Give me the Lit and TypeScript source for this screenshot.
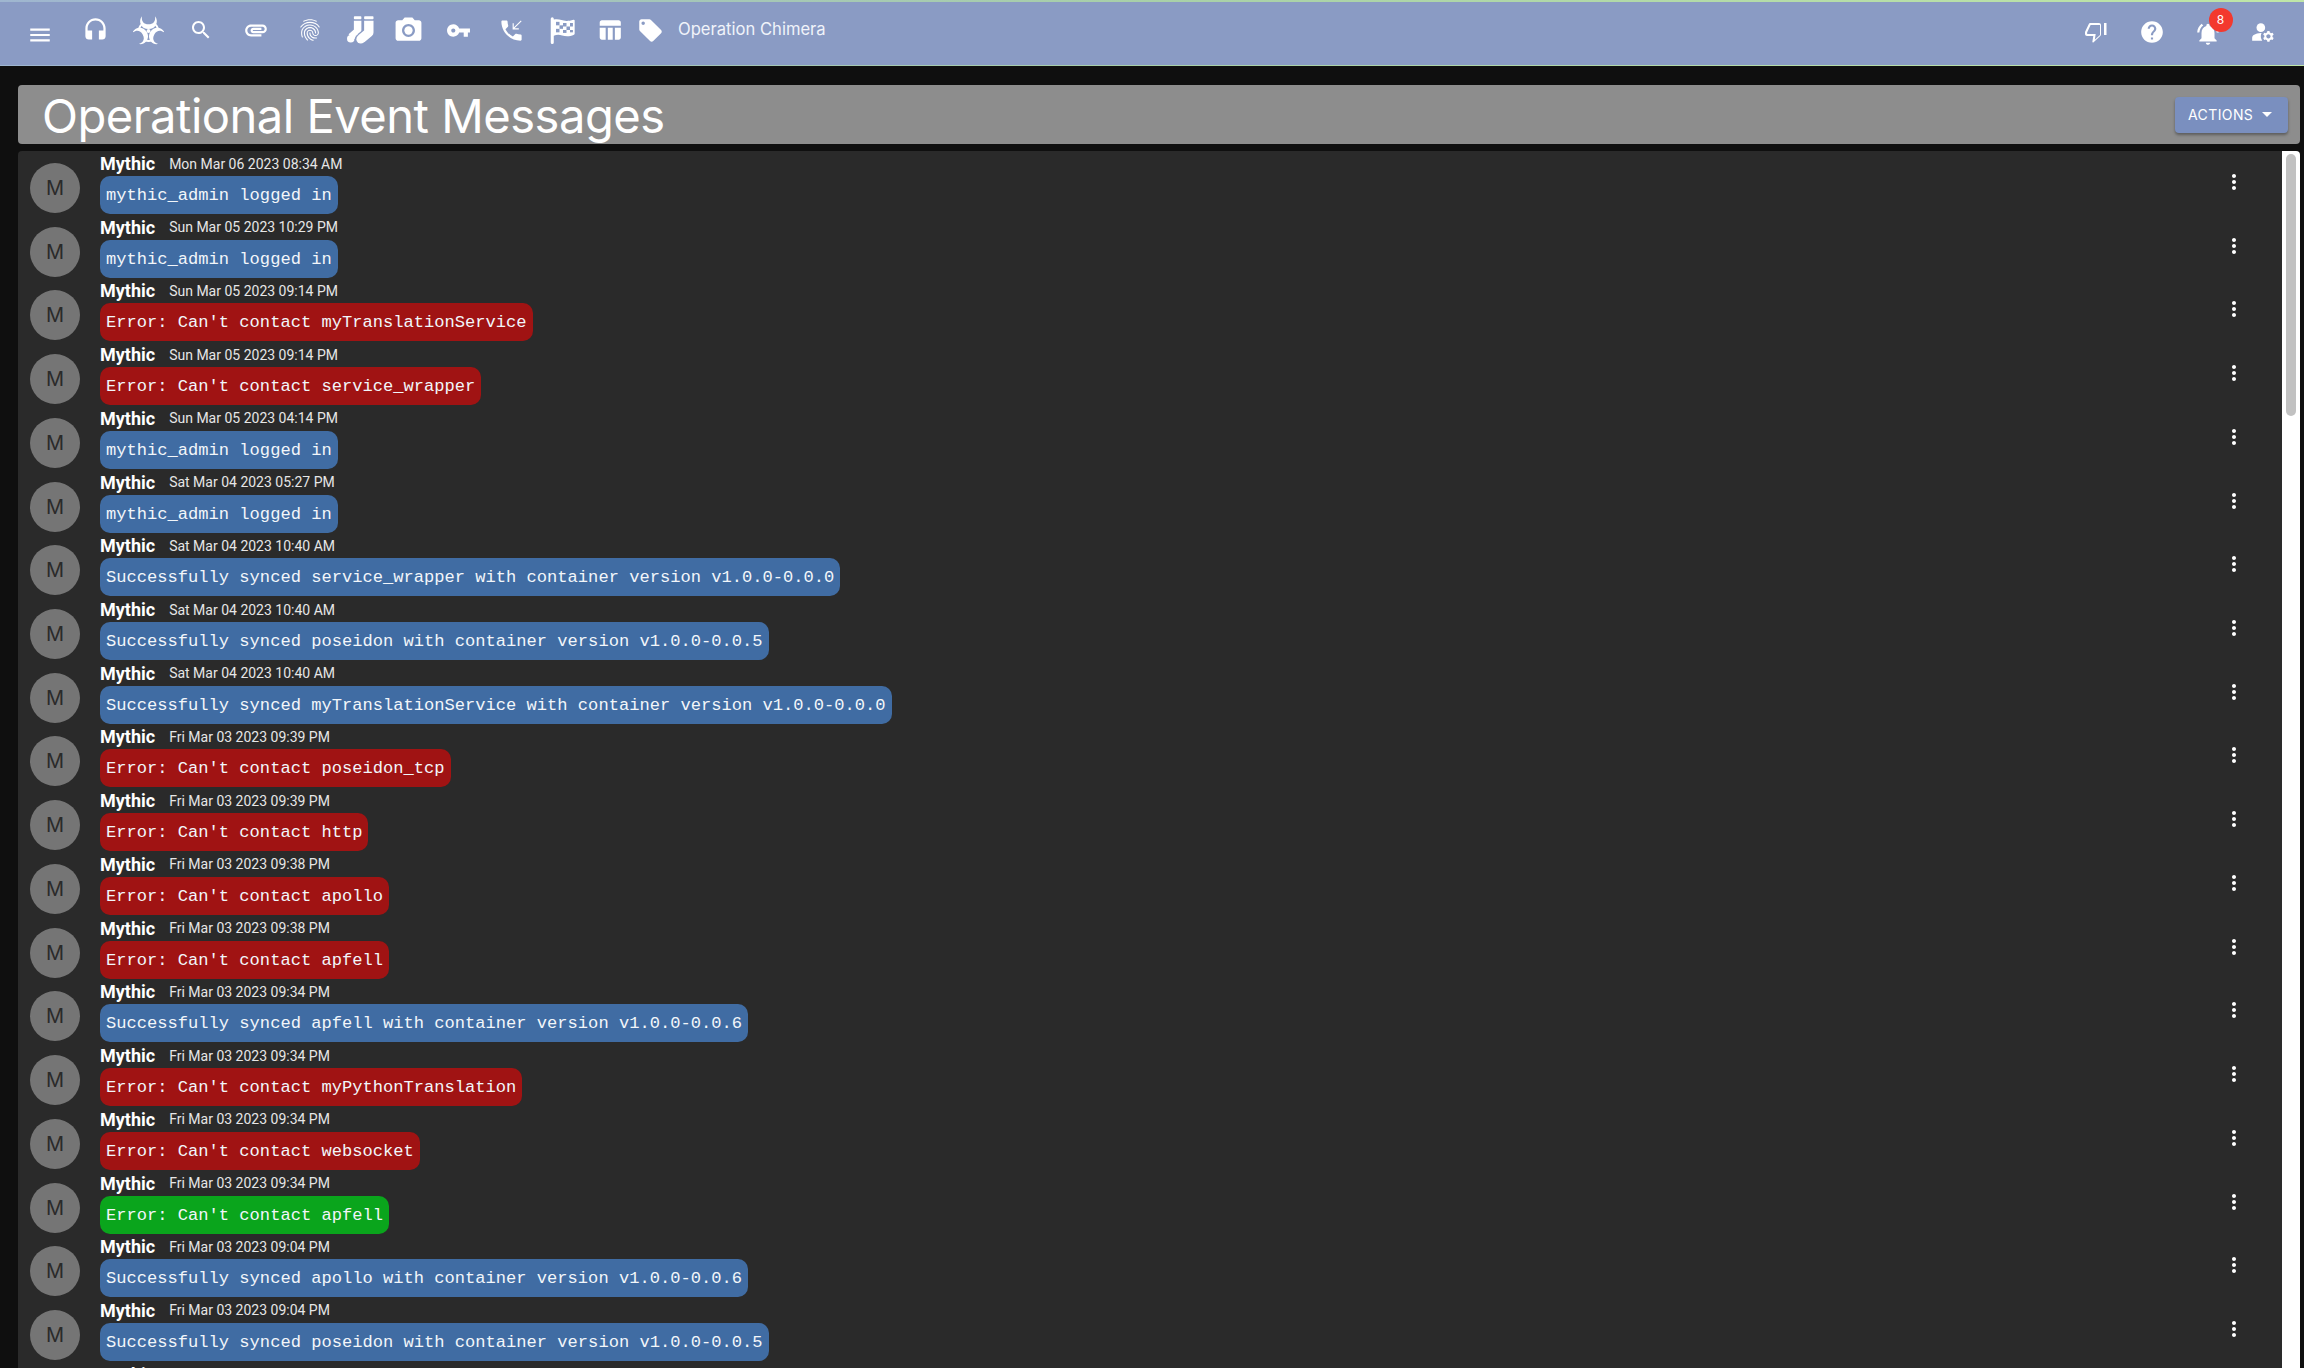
import { LitElement, html, css, svg } from "lit";
import { customElement } from "lit/decorators.js";

type Kind = "info" | "error" | "ok";
const rows: [string, string, Kind][] = [
  ["Mon Mar 06 2023 08:34 AM", "mythic_admin logged in", "info"],
  ["Sun Mar 05 2023 10:29 PM", "mythic_admin logged in", "info"],
  ["Sun Mar 05 2023 09:14 PM", "Error: Can't contact myTranslationService", "error"],
  ["Sun Mar 05 2023 09:14 PM", "Error: Can't contact service_wrapper", "error"],
  ["Sun Mar 05 2023 04:14 PM", "mythic_admin logged in", "info"],
  ["Sat Mar 04 2023 05:27 PM", "mythic_admin logged in", "info"],
  ["Sat Mar 04 2023 10:40 AM", "Successfully synced service_wrapper with container version v1.0.0-0.0.0", "info"],
  ["Sat Mar 04 2023 10:40 AM", "Successfully synced poseidon with container version v1.0.0-0.0.5", "info"],
  ["Sat Mar 04 2023 10:40 AM", "Successfully synced myTranslationService with container version v1.0.0-0.0.0", "info"],
  ["Fri Mar 03 2023 09:39 PM", "Error: Can't contact poseidon_tcp", "error"],
  ["Fri Mar 03 2023 09:39 PM", "Error: Can't contact http", "error"],
  ["Fri Mar 03 2023 09:38 PM", "Error: Can't contact apollo", "error"],
  ["Fri Mar 03 2023 09:38 PM", "Error: Can't contact apfell", "error"],
  ["Fri Mar 03 2023 09:34 PM", "Successfully synced apfell with container version v1.0.0-0.0.6", "info"],
  ["Fri Mar 03 2023 09:34 PM", "Error: Can't contact myPythonTranslation", "error"],
  ["Fri Mar 03 2023 09:34 PM", "Error: Can't contact websocket", "error"],
  ["Fri Mar 03 2023 09:34 PM", "Error: Can't contact apfell", "ok"],
  ["Fri Mar 03 2023 09:04 PM", "Successfully synced apollo with container version v1.0.0-0.0.6", "info"],
  ["Fri Mar 03 2023 09:04 PM", "Successfully synced poseidon with container version v1.0.0-0.0.5", "info"],
  ["Fri Mar 03 2023 09:04 PM", "Successfully synced apollo with container version v1.0.0-0.0.6", "info"],
];

const ic = (size: number, body: unknown) =>
  html`<svg class="ic" width=${size} height=${size} viewBox="0 0 24 24" fill="currentColor">${body}</svg>`;

const BAR = "#8a9bc4";
const menu = svg`<path d="M3 18h18v-2H3v2zm0-5h18v-2H3v2zm0-7v2h18V6H3z"/>`;
const headset = svg`<path d="M12 1c-4.97 0-9 4.03-9 9v7c0 1.66 1.34 3 3 3h3v-8H5v-2c0-3.87 3.13-7 7-7s7 3.13 7 7v2h-4v8h3c1.66 0 3-1.34 3-3v-7c0-4.97-4.03-9-9-9z"/>`;
const lobe = "M7 1.500C3.500 5.500 6.500 11.500 12 11.500S20.500 5.500 17 1.500C17.800 5.500 15.500 7.800 12 7.800S6.200 5.500 7 1.500z";
const biohazard = svg`
  <g transform="translate(0 -0.6)">
    <path d=${lobe}/>
    <path d=${lobe} transform="rotate(120 12 13)"/>
    <path d=${lobe} transform="rotate(240 12 13)"/>
    <path d="M4.800 10.800A7.500 7.500 0 0 1 7.800 7M16.200 7a7.500 7.500 0 0 1 3 3.800M9 20a7.500 7.500 0 0 0 6 0" fill="none" stroke="currentColor" stroke-width="1.500"/>
    <circle cx="12" cy="13" r="1.500"/>
  </g>`;
const search = svg`<path d="M15.5 14h-.79l-.28-.27C15.41 12.59 16 11.11 16 9.5 16 5.91 13.09 3 9.5 3S3 5.91 3 9.5 5.91 16 9.5 16c1.61 0 3.09-.59 4.23-1.57l.27.28v.79l5 4.99L20.49 19l-4.99-5zm-6 0C7.010 14 5 11.990 5 9.500S7.010 5 9.500 5 14 7.010 14 9.500 11.990 14 9.500 14z"/>`;
const attach = svg`<path d="M2 12.5C2 9.46 4.46 7 7.5 7H18c2.21 0 4 1.790 4 4s-1.790 4-4 4H9.500C8.120 15 7 13.880 7 12.500S8.120 10 9.500 10H17v2H9.410c-.55 0-.55 1 0 1H18c1.100 0 2-.9 2-2s-.9-2-2-2H7.500C5.570 9 4 10.570 4 12.500S5.570 16 7.500 16H17v2H7.500C4.460 18 2 15.540 2 12.500z"/>`;
const fingerprint = svg`<path d="M17.81 4.47c-.08 0-.16-.02-.23-.06C15.66 3.42 14 3 12.01 3c-1.98 0-3.86.47-5.57 1.41-.24.13-.54.04-.68-.2-.13-.24-.04-.55.2-.68C7.82 2.52 9.86 2 12.01 2c2.13 0 3.99.47 6.03 1.52.25.13.34.43.21.67-.09.18-.26.28-.44.28zM3.5 9.72c-.1 0-.2-.03-.29-.09-.23-.16-.28-.47-.12-.7.99-1.4 2.25-2.5 3.75-3.27C9.98 4.04 14 4.03 17.15 5.65c1.5.77 2.76 1.86 3.75 3.25.16.22.11.54-.12.7-.23.16-.54.11-.7-.12-.9-1.26-2.04-2.25-3.39-2.94-2.87-1.47-6.54-1.47-9.4.01-1.36.7-2.5 1.7-3.4 2.96-.08.14-.23.21-.39.21zm6.25 12.07c-.13 0-.26-.05-.35-.15-.87-.87-1.34-1.43-2.01-2.64-.69-1.23-1.05-2.73-1.05-4.34 0-2.97 2.54-5.39 5.66-5.39s5.66 2.42 5.66 5.39c0 .28-.22.5-.5.5s-.5-.22-.5-.5c0-2.42-2.09-4.39-4.66-4.39-2.57 0-4.66 1.97-4.66 4.39 0 1.44.32 2.77.93 3.85.64 1.15 1.08 1.64 1.85 2.42.19.2.19.51 0 .71-.11.1-.24.15-.37.15zm7.17-1.85c-1.19 0-2.24-.3-3.1-.89-1.49-1.01-2.38-2.65-2.38-4.39 0-.28.22-.5.5-.5s.5.22.5.5c0 1.41.72 2.74 1.94 3.56.71.48 1.54.71 2.54.71.24 0 .64-.03 1.04-.1.27-.05.53.13.58.41.05.27-.13.53-.41.58-.57.11-1.07.12-1.21.12zM14.91 22c-.04 0-.09-.01-.13-.02-1.59-.44-2.63-1.03-3.72-2.1-1.4-1.39-2.17-3.24-2.17-5.22 0-1.62 1.38-2.94 3.08-2.94 1.7 0 3.08 1.32 3.08 2.94 0 1.07.93 1.94 2.08 1.94s2.08-.87 2.08-1.94c0-3.77-3.25-6.83-7.25-6.83-2.84 0-5.44 1.58-6.61 4.03-.39.81-.59 1.76-.59 2.8 0 .78.07 2.01.67 3.61.1.26-.03.55-.29.64-.26.1-.55-.04-.64-.29-.49-1.31-.73-2.61-.73-3.96 0-1.2.23-2.29.68-3.24 1.33-2.79 4.28-4.6 7.51-4.6 4.55 0 8.25 3.51 8.25 7.83 0 1.62-1.38 2.94-3.08 2.94s-3.08-1.32-3.08-2.94c0-1.07-.93-1.94-2.08-1.94s-2.08.87-2.08 1.94c0 1.71.66 3.31 1.87 4.51.95.94 1.86 1.46 3.27 1.85.27.07.42.35.35.61-.05.23-.26.38-.47.38z"/>`;
const socks = svg`
  <rect x="6.300" y="1" width="6" height="2.300" rx=".6"/>
  <rect x="14.500" y="1" width="7.500" height="2.300" rx=".6"/>
  <path d="M9.300 4.500v8.500L4 17.600" fill="none" stroke="currentColor" stroke-width="6" stroke-linejoin="round"/>
  <circle cx="3.800" cy="19" r="3"/>
  <path d="M18.200 4.500v9.500l-6 5" fill="none" stroke=${BAR} stroke-width="9.500" stroke-linejoin="round"/>
  <circle cx="11.500" cy="19.500" r="4.500" fill=${BAR}/>
  <path d="M18.250 4.500v9.500l-6 5" fill="none" stroke="currentColor" stroke-width="7.500" stroke-linejoin="round"/>
  <circle cx="11.800" cy="19.300" r="3.500"/>`;
const camera = svg`<circle cx="12" cy="12" r="3.200"/><path d="M9 2 7.170 4H4c-1.100 0-2 .9-2 2v12c0 1.100.9 2 2 2h16c1.100 0 2-.9 2-2V6c0-1.100-.9-2-2-2h-3.170L15 2H9zm3 15c-2.760 0-5-2.240-5-5s2.240-5 5-5 5 2.240 5 5-2.240 5-5 5z"/>`;
const key = svg`<path d="M12.650 10C11.830 7.670 9.610 6 7 6c-3.310 0-6 2.690-6 6s2.690 6 6 6c2.610 0 4.830-1.670 5.650-4H17v4h4v-4h2v-4H12.650zM7 14c-1.100 0-2-.9-2-2s.9-2 2-2 2 .9 2 2-.9 2-2 2z"/>`;
const phone = svg`<path d="M20 15.500c-1.250 0-2.450-.2-3.570-.57-.35-.11-.74-.03-1.020.24l-2.200 2.200c-2.830-1.440-5.150-3.750-6.590-6.590l2.200-2.210c.28-.27.36-.66.25-1.010C8.700 6.450 8.500 5.250 8.500 4c0-.55-.45-1-1-1H4c-.55 0-1 .45-1 1 0 9.390 7.610 17 17 17 .55 0 1-.45 1-1v-3.500c0-.55-.45-1-1-1z"/><path d="M21 3.700 20.300 3 14 9.300V5.500h-1V11h5.500v-1h-3.800z"/>`;
const flag = svg`<path d="M2.800 1a1.300 1.300 0 0 1 1.300 1.300v.8C6.500 2.400 8.700 2.800 10.700 3.500c2.700.9 6 1.100 10.300-.3.5-.2 1 .2 1 .7v11.300c0 .4-.2.700-.6.900-3.800 1.700-7.200 1.500-10.100.6-2.300-.7-4.700-.8-7.200.2v5.800a1.300 1.300 0 0 1-2.600 0V2.300A1.300 1.300 0 0 1 2.800 1z"/>
  <g fill=${BAR}><rect x="6" y="5" width="3" height="3"/><rect x="12" y="6" width="3" height="3"/><rect x="18" y="6" width="2.500" height="3"/><rect x="9" y="8" width="3" height="3"/><rect x="15" y="9" width="3" height="3"/><rect x="6" y="11" width="3" height="3"/><rect x="12" y="12" width="3" height="2.500"/><rect x="18" y="12" width="2.500" height="2"/></g>`;
const table = svg`<path d="M10 10.020h4.500V21H10zM16.500 21H20c1.100 0 2-.9 2-2v-9h-5.500v11zM20 3H4.500c-1.100 0-2 .9-2 2v3H22V5c0-1.100-.9-2-2-2zM2.500 19c0 1.100.9 2 2 2H8V10H2.500v9z"/>`;
const tag = svg`<path d="M21.410 11.580l-9-9C12.050 2.220 11.550 2 11 2H4c-1.100 0-2 .9-2 2v7c0 .55.22 1.050.59 1.420l9 9c.36.36.86.58 1.410.58.55 0 1.050-.22 1.410-.59l7-7c.37-.36.59-.86.59-1.410 0-.55-.23-1.060-.59-1.420zM5.500 7C4.670 7 4 6.330 4 5.500S4.670 4 5.500 4 7 4.670 7 5.500 6.330 7 5.500 7z"/>`;
const thumb = svg`<path d="M16 3H6.500c-.8 0-1.500.45-1.800 1.150L1.200 11.600c-.13.3-.2.6-.2.9v1.500c0 1.100.9 2 2 2h6.300l-.95 5.700c-.1.6.5 1.100 1 .7l6.900-6.500c.5-.4.750-1 .750-1.600V5c0-1.100-.9-2-2-2zm0 2v10l-5.200 4.800.9-5.800H3.200l-.1-1.400L6.600 5H16zM20 3h2.500v12H20z"/>`;
const help = svg`<path d="M12 2C6.480 2 2 6.480 2 12s4.480 10 10 10 10-4.480 10-10S17.520 2 12 2zm1 17h-2v-2h2v2zm2.070-7.750l-.9.92C13.450 12.900 13 13.500 13 15h-2v-.5c0-1.100.45-2.100 1.170-2.830l1.240-1.260c.37-.36.59-.86.59-1.410 0-1.100-.9-2-2-2s-2 .9-2 2H8c0-2.210 1.790-4 4-4s4 1.790 4 4c0 .88-.36 1.680-.93 2.250z"/>`;
const bell = svg`<path d="M7.580 4.080 6.150 2.650C3.750 4.480 2.170 7.300 2.030 10.500h2c.15-2.650 1.510-4.970 3.550-6.420zm12.390 6.420h2c-.15-3.200-1.730-6.020-4.120-7.850l-1.420 1.430c2.020 1.450 3.390 3.770 3.540 6.420zM18 11c0-3.070-1.640-5.640-4.500-6.320V4c0-.83-.67-1.500-1.500-1.500s-1.500.67-1.500 1.500v.68C7.630 5.360 6 7.920 6 11v5l-2 2v1h16v-1l-2-2v-5zm-6 11c.14 0 .27-.01.4-.04.65-.14 1.180-.58 1.440-1.180.1-.24.15-.5.15-.78h-4c.01 1.100.9 2 2.010 2z"/>`;
const manage = svg`<circle cx="10" cy="8" r="4"/><path d="M10.670 13.020c-.22-.01-.44-.02-.67-.02-2.420 0-4.680.67-6.610 1.820-.88.52-1.390 1.500-1.390 2.530V20h9.260c-.79-1.130-1.260-2.510-1.260-4 0-1.070.25-2.070.67-2.980zM20.750 16c0-.22-.03-.42-.06-.63l1.140-1.010-1-1.730-1.450.49c-.32-.27-.68-.48-1.080-.63L18 11h-2l-.3 1.490c-.4.15-.76.36-1.080.63l-1.450-.49-1 1.730 1.140 1.010c-.03.21-.06.41-.06.63s.03.42.06.63l-1.140 1.010 1 1.730 1.450-.49c.32.27.68.48 1.080.63L16 21h2l.3-1.490c.4-.15.76-.36 1.080-.63l1.450.49 1-1.730-1.140-1.010c.03-.21.06-.41.06-.63zM17 18c-1.100 0-2-.9-2-2s.9-2 2-2 2 .9 2 2-.9 2-2 2z"/>`;
const more = svg`<path d="M12 8c1.100 0 2-.9 2-2s-.9-2-2-2-2 .9-2 2 .9 2 2 2zm0 2c-1.100 0-2 .9-2 2s.9 2 2 2 2-.9 2-2-.9-2-2-2zm0 6c-1.100 0-2 .9-2 2s.9 2 2 2 2-.9 2-2-.9-2-2-2z"/>`;

// [centre x in the toolbar, icon size, glyph]
const tools: [number, number, unknown][] = [
  [40, 26, menu],
  [96, 27, headset],
  [148, 31, biohazard],
  [200, 24, search],
  [256, 26, attach],
  [311, 26, fingerprint],
  [362, 30, socks],
  [407, 31, camera],
  [457.5, 25, key],
  [513, 27, phone],
  [564, 28, flag],
  [610, 26, table],
  [655, 27, tag],
];
const TOOLS_START = 12;
const TOOLS_END = 668;
const cellWidth = (i: number) => {
  const left = i === 0 ? TOOLS_START : (tools[i - 1][0] + tools[i][0]) / 2;
  const right = i === tools.length - 1 ? TOOLS_END : (tools[i][0] + tools[i + 1][0]) / 2;
  return right - left;
};

@customElement("app-root")
export class AppRoot extends LitElement {
  static styles = css`
    :host { display: block; height: 1368px; overflow: hidden; background: #0f0f0f; font-family: Inter, "Liberation Sans", sans-serif; color: #fff; }
    .ic { display: block; flex: none; }
    .bar { height: 66px; box-sizing: border-box; background: #8a9bc4; border-top: 2px solid; border-image: linear-gradient(90deg, #9fb6d0, #a8d0a8, #bfe6a8) 1; border-bottom: 1px solid #3e4a66; display: flex; align-items: flex-start; color: #fff; }
    .tools { display: flex; align-items: center; height: 56px; padding-left: 12px; }
    .t { display: flex; justify-content: center; align-items: center; flex: none; }
    .t.first { margin-top: 9px; }
    .opname { font-size: 16.6px; color: #f0f3fa; margin-left: 10px; margin-top: -3px; white-space: nowrap; }
    .right { margin-left: auto; height: 60px; display: flex; align-items: center; padding-right: 13px; }
    .cell { width: 55.67px; display: flex; justify-content: center; flex: none; }
    .bellwrap { position: relative; margin-top: 3px; }
    .badge { position: absolute; left: 14px; top: -13px; width: 24px; height: 24px; border-radius: 50%; background: #f3392e; color: #fff; font-size: 12px; display: flex; align-items: center; justify-content: center; }
    .header { margin: 19px 4px 0 18px; height: 59px; background: #8d8d8d; border-radius: 4px; display: flex; align-items: center; justify-content: space-between; padding: 0 12px 0 24px; }
    .header h1 { margin: 3px 0 0; font-weight: 400; font-size: 47.1px; line-height: 56px; color: #fff; font-family: Inter, "Liberation Sans", sans-serif; letter-spacing: -0.5px; }
    .actions { height: 36px; width: 113px; box-sizing: border-box; padding-left: 13px; border-radius: 4px; background: #7a8fbf; color: #fff; font-size: 14px; letter-spacing: 0.4px; display: flex; align-items: center; gap: 9px; box-shadow: 0 2px 3px rgba(0,0,0,.35); font-weight: 400; font-family: Inter, Roboto, sans-serif; }
    .caret { width: 0; height: 0; border-left: 5px solid transparent; border-right: 5px solid transparent; border-top: 5px solid #fff; }
    .panel { margin: 7px 4px 0 18px; display: flex; height: 1217px; background: #2a2a2a; border-radius: 4px 4px 0 0; overflow: hidden; }
    .list { flex: 1; min-width: 0; }
    .row { height: 63.72px; display: flex; box-sizing: border-box; padding-left: 12px; padding-right: 36px; }
    .avatar { flex: none; width: 50px; height: 50px; margin-top: 12px; border-radius: 50%; background: #757575; color: #2a2a2a; display: flex; align-items: center; justify-content: center; font-size: 20px; font-family: Inter, sans-serif; margin-right: 20px; }
    .body { flex: 1; min-width: 0; }
    .who { height: 25px; display: flex; align-items: center; gap: 14px; }
    .name { font-size: 18px; font-weight: 700; font-family: Roboto, sans-serif; color: #fff; }
    .date { font-size: 14px; font-family: Roboto, sans-serif; color: #e6e6e6; }
    .msg { display: inline-block; height: 38px; line-height: 40px; padding: 0 6px; border-radius: 10px; font-family: "Liberation Mono", monospace; font-size: 17.1px; white-space: pre; color: #f2f6fa; box-sizing: border-box; vertical-align: top; }
    .info { background: #406ca3; }
    .error { background: #a01313; }
    .ok { background: #0aa51c; }
    .more { flex: none; margin-top: 19px; height: 24px; color: #fff; }
    .scroll { flex: none; width: 18px; background: #fff; display: flex; justify-content: center; padding-top: 3px; box-sizing: border-box; }
    .thumbbar { width: 10px; height: 262px; background: #c1c1c1; border-radius: 5px; }
  `;

  render() {
    return html`
      <div class="bar">
        <div class="tools">
          ${tools.map(([, s, b], i) => html`<div class="t ${i === 0 ? "first" : ""}" style="width:${cellWidth(i)}px">${ic(s, b)}</div>`)}
          <div class="opname">Operation Chimera</div>
        </div>
        <div class="right">
          <div class="cell">${ic(24, thumb)}</div>
          <div class="cell">${ic(26, help)}</div>
          <div class="cell"><div class="bellwrap">${ic(26, bell)}<span class="badge">8</span></div></div>
          <div class="cell">${ic(26, manage)}</div>
        </div>
      </div>
      <div class="header"><h1>Operational Event Messages</h1><div class="actions">ACTIONS <span class="caret"></span></div></div>
      <div class="panel">
        <div class="list">
          ${rows.map(([d, m, k]) => html`<div class="row">
            <div class="avatar">M</div>
            <div class="body">
              <div class="who"><span class="name">Mythic</span><span class="date">${d}</span></div>
              <div class="msg ${k}">${m}</div>
            </div>
            <div class="more">${ic(24, more)}</div>
          </div>`)}
        </div>
        <div class="scroll"><div class="thumbbar"></div></div>
      </div>
    `;
  }
}
